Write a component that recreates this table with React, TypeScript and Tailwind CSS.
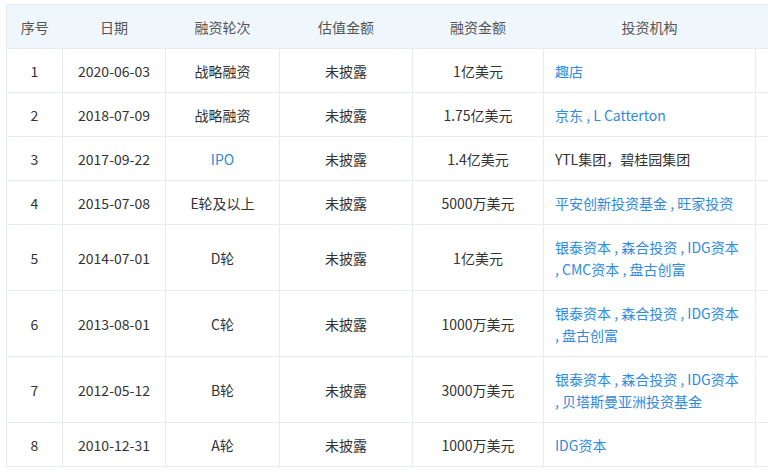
import React from "react";

type Row = {
  n: number;
  date: string;
  round: string;
  roundLink?: boolean;
  val: string;
  amt: string;
  inv: string[];
  invPlain?: boolean;
};

const rows: Row[] = [
  { n: 1, date: "2020-06-03", round: "战略融资", val: "未披露", amt: "1亿美元", inv: ["趣店"] },
  { n: 2, date: "2018-07-09", round: "战略融资", val: "未披露", amt: "1.75亿美元", inv: ["京东", "L Catterton"] },
  { n: 3, date: "2017-09-22", round: "IPO", roundLink: true, val: "未披露", amt: "1.4亿美元", inv: ["YTL集团", "碧桂园集团"], invPlain: true },
  { n: 4, date: "2015-07-08", round: "E轮及以上", val: "未披露", amt: "5000万美元", inv: ["平安创新投资基金", "旺家投资"] },
  { n: 5, date: "2014-07-01", round: "D轮", val: "未披露", amt: "1亿美元", inv: ["银泰资本", "森合投资", "IDG资本", "CMC资本", "盘古创富"] },
  { n: 6, date: "2013-08-01", round: "C轮", val: "未披露", amt: "1000万美元", inv: ["银泰资本", "森合投资", "IDG资本", "盘古创富"] },
  { n: 7, date: "2012-05-12", round: "B轮", val: "未披露", amt: "3000万美元", inv: ["银泰资本", "森合投资", "IDG资本", "贝塔斯曼亚洲投资基金"] },
  { n: 8, date: "2010-12-31", round: "A轮", val: "未披露", amt: "1000万美元", inv: ["IDG资本"] },
];

const font = { fontFamily: '"Noto Sans CJK SC", "Noto Sans", sans-serif' };

const cell = "border border-[#e6ebf0] pt-[11px] pb-[10px]";

export default function App() {
  return (
    <div className="w-[768px] h-[475px] overflow-hidden bg-white pt-[4px] pl-[6px]" style={font}>
      <table className="w-[830px] border-collapse table-fixed text-[14px] leading-[22px] text-[#333]">
        <colgroup>
          <col className="w-[56px]" />
          <col className="w-[103px]" />
          <col className="w-[114px]" />
          <col className="w-[133px]" />
          <col className="w-[131px]" />
          <col className="w-[212px]" />
          <col className="w-[81px]" />
        </colgroup>
        <thead>
          <tr className="h-[44px] bg-[#f0f7fc] text-[#555]">
            <th className="font-normal text-center border-t border-b border-l border-[#e6ebf0]">序号</th>
            <th className="font-normal text-center border-t border-b border-[#e6ebf0]">日期</th>
            <th className="font-normal text-center border-t border-b border-[#e6ebf0]">融资轮次</th>
            <th className="font-normal text-center border-t border-b border-[#e6ebf0]">估值金额</th>
            <th className="font-normal text-center border-t border-b border-[#e6ebf0]">融资金额</th>
            <th className="font-normal text-center border-t border-b border-[#e6ebf0]">投资机构</th>
            <th className="font-normal text-center border-t border-b border-[#e6ebf0]"></th>
          </tr>
        </thead>
        <tbody>
          {rows.map((r) => (
            <tr key={r.n}>
              <td className={cell + " text-center"}>{r.n}</td>
              <td className={cell + " text-center"}>{r.date}</td>
              <td className={cell + " text-center " + (r.roundLink ? "text-[#2f8ae0]" : "")}>{r.round}</td>
              <td className={cell + " text-center"}>{r.val}</td>
              <td className={cell + " text-center"}>{r.amt}</td>
              <td className={cell + " text-left pl-[11px] pr-[10px] " + (r.invPlain ? "text-[#333]" : "text-[#2f8ae0]")}>
                {r.inv.map((name, i) => (
                  <React.Fragment key={i}>
                    {i > 0 ? (r.invPlain ? "，" : " , ") : null}
                    <span>{name}</span>
                  </React.Fragment>
                ))}
              </td>
              <td className="border border-[#e6ebf0]"></td>
            </tr>
          ))}
        </tbody>
      </table>
    </div>
  );
}
